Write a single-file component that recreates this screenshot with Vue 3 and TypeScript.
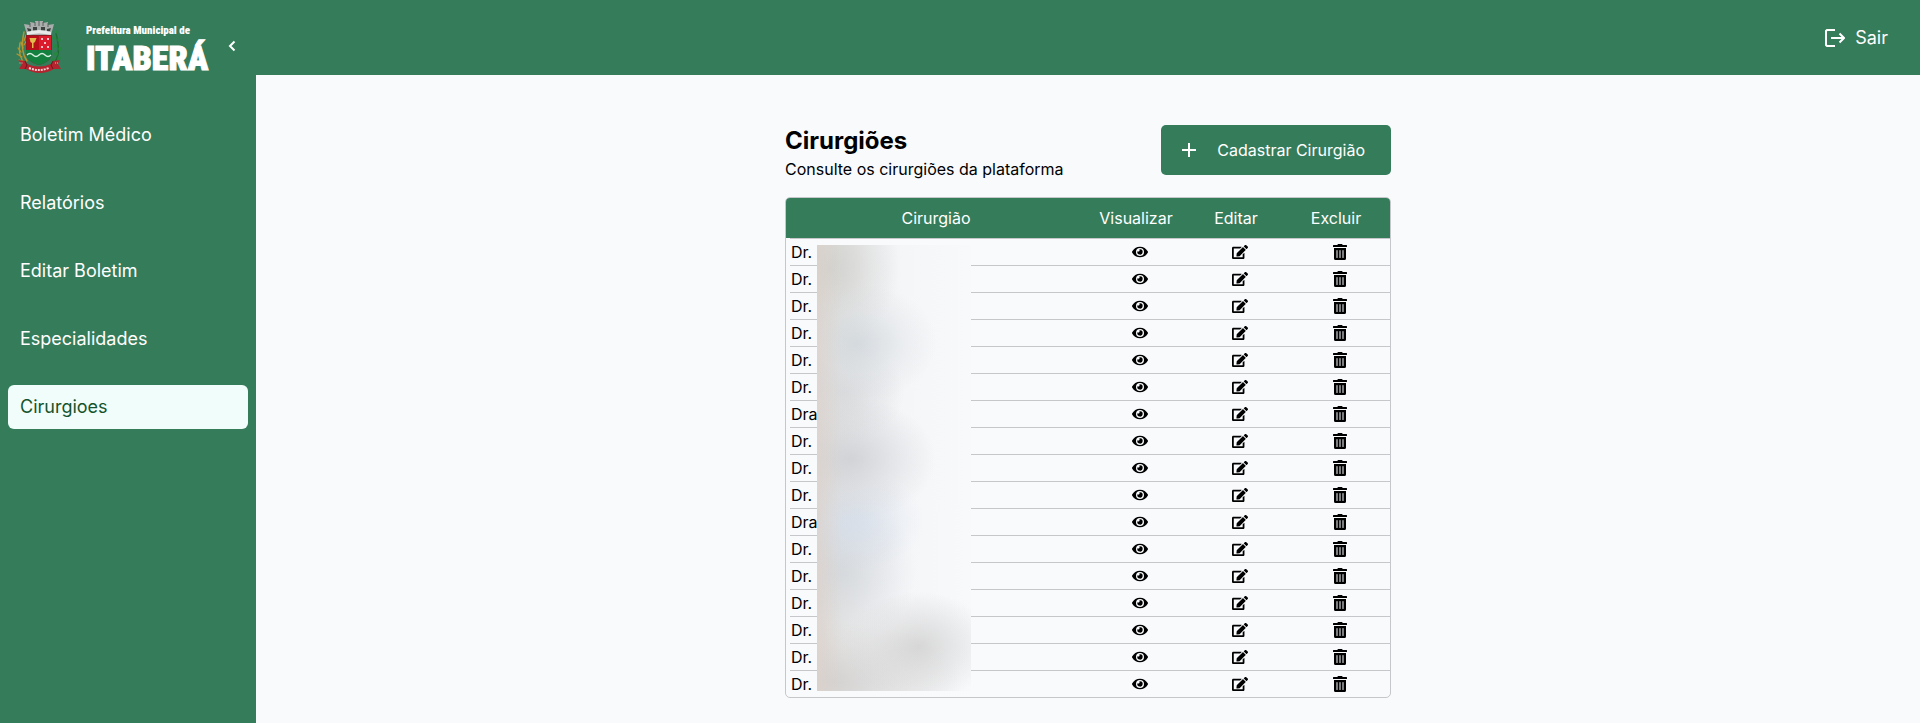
<script setup lang="ts">
import { ref } from 'vue'

interface MenuItem {
  label: string
  href: string
}

const menu: MenuItem[] = [
  { label: 'Boletim Médico', href: '#boletim' },
  { label: 'Relatórios', href: '#relatorios' },
  { label: 'Editar Boletim', href: '#editar' },
  { label: 'Especialidades', href: '#especialidades' },
  { label: 'Cirurgioes', href: '#cirurgioes' },
]
const current = ref('Cirurgioes')

const surgeons: string[] = [
  'Dr.', 'Dr.', 'Dr.', 'Dr.', 'Dr.', 'Dr.', 'Dra', 'Dr.', 'Dr.',
  'Dr.', 'Dra', 'Dr.', 'Dr.', 'Dr.', 'Dr.', 'Dr.', 'Dr.',
]
</script>

<template>
  <div class="layout">
    <aside class="sidebar">
      <div class="brand">
        <svg class="crest" viewBox="0 0 48 56" aria-hidden="true">
          <g fill="none" stroke="#b8962f" stroke-width="1.4" stroke-linecap="round">
            <path d="M11 47C5 41 3 34 5 25" />
            <path d="M12 43C7 36 6 27 9 14" />
            <path d="M3 30l3 4M2 36l5 3M4 42l5 2M6 24l2 6M11 17l-2 6M12 22l-3 5" stroke-width="1.2" />
          </g>
          <path d="M38 46C44 40 45 32 41 15" fill="none" stroke="#1f6b35" stroke-width="1.4" />
          <g fill="#25883f">
            <circle cx="42" cy="14" r="1.5" /><circle cx="39" cy="20" r="1.8" /><circle cx="44" cy="22" r="1.8" />
            <circle cx="40" cy="28" r="2" /><circle cx="45" cy="31" r="1.8" /><circle cx="41" cy="36" r="2.1" />
            <circle cx="44" cy="40" r="1.8" /><circle cx="38" cy="42" r="2" />
          </g>
          <path d="M9 6l6 1v-3l5 1V3h8v2l5-1v3l6-1-3 11H12z" fill="#a9adab" />
          <path d="M12 10l4 1v3l-3-1zM18 9h4v4h-4zM26 9h4v4h-4zM32 11l4-1-1 3-3 1z" fill="#3d4341" />
          <path d="M15 5v4M20 4v4M24 3v5M28 4v4M33 5v4" stroke="#5b615e" stroke-width="1" />
          <path d="M12 14q12-4 24 0v3q-12-3-24 0z" fill="#e7e9e8" />
          <path d="M11 17h26v17c0 8-6 11-13 13-7-2-13-5-13-13z" fill="#8f1a22" />
          <path d="M12 18h12v14H12z" fill="#b80f1a" />
          <path d="M24 18h12v14H24z" fill="#dc1c2c" />
          <path d="M14.500 20h7l-1.500 4-1.500 1v5h-1.500v-5l-1.500-1z" fill="#e2b94c" />
          <g fill="#fff">
            <circle cx="27" cy="21" r="1" /><circle cx="33" cy="21" r="1" /><circle cx="30" cy="25" r="1" />
            <circle cx="27" cy="29" r="1" /><circle cx="33" cy="29" r="1" />
          </g>
          <path d="M11 32h26v2c0 8-6 11-13 13-7-2-13-5-13-13z" fill="#14803f" />
          <path d="M12 37q3-3 6 0t6 0 6 0 6 0" fill="none" stroke="#d8efe2" stroke-width="1.500" />
          <path d="M3 42l7 1 2 3q12 5 24 0l2-3 7-1-2 4 3 5-7 0q-14 8-28 0l-7 0 3-5z" fill="#b3242e" />
          <path d="M10 43l2 4-2 4M38 43l-2 4 2 4" fill="none" stroke="#6f131b" stroke-width="1" />
          <path d="M14 50q10 4 20 0" fill="none" stroke="#f1d5d5" stroke-width="2" stroke-dasharray="2 1" />
          <path d="M4.500 45h4M40 45h4" stroke="#e9b8b8" stroke-width="1" stroke-dasharray="1 1" />
        </svg>
        <p class="brand-name">
          <span class="brand-top">Prefeitura Municipal de</span>
          <strong class="brand-city">ITABERÁ</strong>
        </p>
        <button class="collapse" type="button" aria-label="Recolher menu">
          <svg viewBox="0 0 8 12" aria-hidden="true"><path d="M6.500 1.500L2 6l4.500 4.500" /></svg>
        </button>
      </div>
      <nav class="menu">
        <a
          v-for="item in menu"
          :key="item.label"
          :href="item.href"
          class="menu-link"
          :class="{ active: item.label === current }"
          @click.prevent="current = item.label"
        >{{ item.label }}</a>
      </nav>
    </aside>

    <div class="page">
      <header class="topbar">
        <button class="logout" type="button">
          <svg viewBox="0 0 20 18" aria-hidden="true">
            <path d="M10 1H2L1 2v14l1 1h8M6 9h13M14.500 4.500L19 9l-4.500 4.500" />
          </svg>
          Sair
        </button>
      </header>

      <main class="content">
        <div class="heading">
          <div>
            <h1>Cirurgiões</h1>
            <p>Consulte os cirurgiões da plataforma</p>
          </div>
          <button class="create" type="button">
            <svg viewBox="0 0 14 14" aria-hidden="true"><path d="M7 0v14M0 7h14" /></svg>
            <span>Cadastrar Cirurgião</span>
          </button>
        </div>

        <div class="table-box">
          <table>
            <thead>
              <tr>
                <th scope="col">Cirurgião</th>
                <th scope="col">Visualizar</th>
                <th scope="col">Editar</th>
                <th scope="col">Excluir</th>
              </tr>
            </thead>
            <tbody>
              <tr v-for="(name, i) in surgeons" :key="i">
                <td>{{ name }}</td>
                <td>
                  <button type="button" aria-label="Visualizar">
                    <svg viewBox="0 0 576 512" aria-hidden="true"><path d="M572.52 241.4C518.29 135.59 410.93 64 288 64S57.68 135.64 3.48 241.41a32.35 32.35 0 0 0 0 29.19C57.71 376.41 165.07 448 288 448s230.32-71.64 284.52-177.41a32.35 32.35 0 0 0 0-29.19zM288 400a144 144 0 1 1 144-144 143.93 143.93 0 0 1-144 144zm0-240a95.31 95.31 0 0 0-25.31 3.79 47.85 47.85 0 0 1-66.9 66.9A95.78 95.78 0 1 0 288 160z" /></svg>
                  </button>
                </td>
                <td>
                  <button type="button" aria-label="Editar">
                    <svg viewBox="0 0 576 512" aria-hidden="true"><path d="M402.6 83.2l90.2 90.2c3.8 3.8 3.8 10 0 13.8L274.4 405.6l-92.8 10.3c-12.4 1.4-22.9-9.1-21.5-21.5l10.3-92.8L388.8 83.2c3.8-3.8 10-3.8 13.8 0zm162-22.9l-48.8-48.8c-15.2-15.2-39.9-15.2-55.2 0l-35.4 35.4c-3.8 3.8-3.8 10 0 13.8l90.2 90.2c3.8 3.8 10 3.8 13.8 0l35.4-35.4c15.2-15.3 15.2-40 0-55.2zM384 346.2V448H64V128h229.8c3.2 0 6.2-1.3 8.5-3.5l40-40c7.6-7.6 2.2-20.5-8.5-20.5H48C21.5 64 0 85.500 0 112v352c0 26.5 21.5 48 48 48h352c26.5 0 48-21.5 48-48V306.2c0-10.7-12.9-16-20.5-8.5l-40 40c-2.2 2.3-3.5 5.3-3.5 8.5z" /></svg>
                  </button>
                </td>
                <td>
                  <button type="button" aria-label="Excluir">
                    <svg viewBox="0 0 448 512" aria-hidden="true"><path d="M32 464a48 48 0 0 0 48 48h288a48 48 0 0 0 48-48V128H32zm272-256a16 16 0 0 1 32 0v224a16 16 0 0 1-32 0zm-96 0a16 16 0 0 1 32 0v224a16 16 0 0 1-32 0zm-96 0a16 16 0 0 1 32 0v224a16 16 0 0 1-32 0zM432 32H312l-9.4-18.7A24 24 0 0 0 281.1 0H166.8a23.72 23.72 0 0 0-21.4 13.3L136 32H16A16 16 0 0 0 0 48v32a16 16 0 0 0 16 16h416a16 16 0 0 0 16-16V48a16 16 0 0 0-16-16z" /></svg>
                  </button>
                </td>
              </tr>
            </tbody>
          </table>
          <div class="privacy-veil" aria-hidden="true"></div>
        </div>
      </main>
    </div>
  </div>
</template>

<style>
body {
  margin: 0;
  background: #f8fafc;
}
</style>

<style scoped>
.layout {
  --green: #357c5b;
  --line: #c6c7ca;
  display: flex;
  min-height: 100vh;
  font-family: Inter, "Liberation Sans", sans-serif;
  font-size: 16px;
  line-height: 24px;
  color: #000;
}
button {
  border: 0;
  padding: 0;
  background: none;
  font: inherit;
  color: inherit;
  cursor: pointer;
}
svg {
  display: block;
}
h1,
p {
  margin: 0;
}
.sidebar {
  flex: 0 0 256px;
  box-sizing: border-box;
  background: var(--green);
  color: #fff;
}
.brand {
  display: flex;
  align-items: center;
  height: 76px;
  padding: 16px 0 0 15px;
  box-sizing: border-box;
}
.crest {
  width: 48px;
  height: 56px;
}
.brand-name {
  display: flex;
  flex-direction: column;
  width: 124px;
  margin: 10px 0 0 23px;
  font-family: Impact, "Roboto Condensed", Roboto, sans-serif;
  font-weight: 900;
  white-space: nowrap;
}
.brand-top {
  font-size: 11px;
  line-height: 14px;
}
.brand-city {
  font-size: 34px;
  line-height: 40px;
  font-weight: 900;
  -webkit-text-stroke: 1px #fff;
}
.collapse {
  margin-left: 18px;
}
.collapse svg {
  width: 8px;
  height: 12px;
  fill: none;
  stroke: #fff;
  stroke-width: 2;
}
.menu {
  display: flex;
  flex-direction: column;
  gap: 24px;
  padding: 37px 8px 0;
}
.menu-link {
  padding: 8px 12px;
  border-radius: 6px;
  font-size: 18px;
  line-height: 28px;
  color: #fff;
  text-decoration: none;
}
.menu-link.active {
  background: #f0fdfa;
  color: #14532d;
}
.page {
  flex: 1;
  min-width: 0;
}
.topbar {
  display: flex;
  align-items: center;
  justify-content: flex-end;
  height: 75px;
  padding: 0 32px;
  box-sizing: border-box;
  background: var(--green);
}
.logout {
  display: flex;
  align-items: center;
  gap: 10px;
  font-size: 18px;
  color: #fff;
}
.logout svg {
  width: 20px;
  height: 18px;
  fill: none;
  stroke: #fff;
  stroke-width: 2;
}
.content {
  width: 606px;
  max-width: 100%;
  margin: 0 auto;
  padding: 50px 0 25px;
}
.heading {
  display: flex;
  justify-content: space-between;
  align-items: flex-start;
  margin-bottom: 16px;
}
h1 {
  font-size: 24px;
  line-height: 32px;
  font-weight: 700;
}
.create {
  display: flex;
  align-items: center;
  gap: 21px;
  height: 50px;
  padding: 0 26px 0 21px;
  border-radius: 5px;
  background: var(--green);
  color: #fff;
}
.create svg {
  width: 14px;
  height: 14px;
  fill: none;
  stroke: #fff;
  stroke-width: 2;
}
.table-box {
  position: relative;
  border: 1px solid var(--line);
  border-radius: 5px;
  overflow: hidden;
}
table,
thead,
tbody {
  display: block;
}
tr {
  display: grid;
  grid-template-columns: 3fr 1fr 1fr 1fr;
  align-items: center;
}
thead {
  padding-right: 4px;
  background: var(--green);
  color: #fff;
}
th {
  padding: 8px 0;
  font-weight: 400;
  text-align: center;
}
tbody {
  padding-left: 4px;
}
tbody tr {
  height: 26px;
  border-top: 1px solid var(--line);
}
td {
  display: flex;
  justify-content: center;
  padding: 0;
}
td:first-child {
  justify-content: flex-start;
  padding-left: 1px;
}
td svg {
  width: 16px;
  height: 16px;
  fill: #000;
}
.privacy-veil {
  position: absolute;
  top: 47px;
  bottom: 6px;
  left: 31px;
  width: 154px;
  background:
    linear-gradient(90deg, rgba(220, 208, 200, 0.6), transparent 16%),
    radial-gradient(ellipse 75px 55px at 66% 90%, rgba(205, 205, 205, 0.75), rgba(212, 212, 212, 0.45) 50%, transparent),
    radial-gradient(ellipse 130px 60px at 10% 98%, rgba(208, 206, 205, 0.8), transparent),
    radial-gradient(ellipse 80px 60px at 26% 22%, rgba(205, 212, 217, 0.75), rgba(215, 220, 224, 0.4) 50%, transparent),
    radial-gradient(ellipse 60px 50px at 18% 33%, rgba(208, 210, 214, 0.6), transparent),
    radial-gradient(ellipse 85px 62px at 22% 48%, rgba(202, 204, 209, 0.75), rgba(210, 212, 216, 0.45) 50%, transparent),
    radial-gradient(ellipse 70px 50px at 24% 62%, rgba(210, 220, 234, 0.7), transparent),
    radial-gradient(ellipse 75px 75px at 16% 73%, rgba(205, 210, 216, 0.65), transparent),
    radial-gradient(ellipse 70px 80px at 8% 5%, rgba(205, 206, 202, 0.8), transparent),
    linear-gradient(90deg, #e2e0de 0%, #e6e6e5 16%, #eff0f2 36%, #f5f6f8 56%, #f7f9fb 100%);
}
</style>
